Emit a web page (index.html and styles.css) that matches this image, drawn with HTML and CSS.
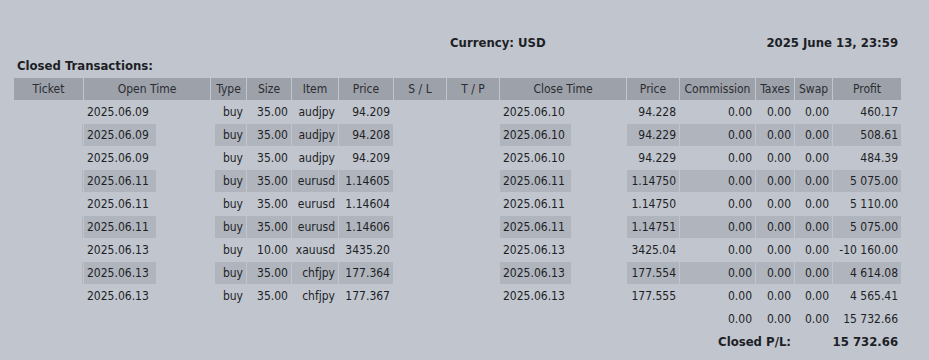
FILE: index.html
```html
<!DOCTYPE html>
<html>
<head>
<meta charset="utf-8">
<link rel="stylesheet" href="styles.css">
</head>
<body>
<table class="report">
  <colgroup>
    <col class="w69"><col class="w72"><col class="w53"><col class="w3"><col class="w31"><col class="w44"><col class="w46"><col class="w54"><col class="w52"><col class="w52"><col class="w71"><col class="w54"><col class="w52"><col class="w75"><col class="w38"><col class="w37"><col class="w68">
  </colgroup>
  <tr class="info">
    <td colspan="9"></td>
    <td colspan="4" class="l b">Currency: USD</td>
    <td colspan="4" class="r b">2025 June 13, 23:59</td>
  </tr>
  <tr class="info">
    <td colspan="17" class="l b">Closed Transactions:</td>
  </tr>
  <tr class="head">
    <td>Ticket</td>
    <td colspan="2">Open Time</td>
    <td colspan="2">Type</td>
    <td>Size</td>
    <td>Item</td>
    <td>Price</td>
    <td>S / L</td>
    <td>T / P</td>
    <td colspan="2">Close Time</td>
    <td>Price</td>
    <td>Commission</td>
    <td>Taxes</td>
    <td>Swap</td>
    <td>Profit</td>
  </tr>
  <tr class="row">
    <td class="tk"></td><td class="l">2025.06.09</td><td></td><td></td><td class="r">buy</td><td class="r">35.00</td><td class="r">audjpy</td><td class="r">94.209</td><td></td><td></td><td class="l">2025.06.10</td><td></td><td class="r">94.228</td><td class="r">0.00</td><td class="r">0.00</td><td class="r">0.00</td><td class="r">460.17</td>
  </tr>
  <tr class="row alt">
    <td class="tk"></td><td class="l">2025.06.09</td><td></td><td></td><td class="r">buy</td><td class="r">35.00</td><td class="r">audjpy</td><td class="r">94.208</td><td></td><td></td><td class="l">2025.06.10</td><td></td><td class="r">94.229</td><td class="r">0.00</td><td class="r">0.00</td><td class="r">0.00</td><td class="r">508.61</td>
  </tr>
  <tr class="row">
    <td class="tk"></td><td class="l">2025.06.09</td><td></td><td></td><td class="r">buy</td><td class="r">35.00</td><td class="r">audjpy</td><td class="r">94.209</td><td></td><td></td><td class="l">2025.06.10</td><td></td><td class="r">94.229</td><td class="r">0.00</td><td class="r">0.00</td><td class="r">0.00</td><td class="r">484.39</td>
  </tr>
  <tr class="row alt">
    <td class="tk"></td><td class="l">2025.06.11</td><td></td><td></td><td class="r">buy</td><td class="r">35.00</td><td class="r">eurusd</td><td class="r">1.14605</td><td></td><td></td><td class="l">2025.06.11</td><td></td><td class="r">1.14750</td><td class="r">0.00</td><td class="r">0.00</td><td class="r">0.00</td><td class="r">5 075.00</td>
  </tr>
  <tr class="row">
    <td class="tk"></td><td class="l">2025.06.11</td><td></td><td></td><td class="r">buy</td><td class="r">35.00</td><td class="r">eurusd</td><td class="r">1.14604</td><td></td><td></td><td class="l">2025.06.11</td><td></td><td class="r">1.14750</td><td class="r">0.00</td><td class="r">0.00</td><td class="r">0.00</td><td class="r">5 110.00</td>
  </tr>
  <tr class="row alt">
    <td class="tk"></td><td class="l">2025.06.11</td><td></td><td></td><td class="r">buy</td><td class="r">35.00</td><td class="r">eurusd</td><td class="r">1.14606</td><td></td><td></td><td class="l">2025.06.11</td><td></td><td class="r">1.14751</td><td class="r">0.00</td><td class="r">0.00</td><td class="r">0.00</td><td class="r">5 075.00</td>
  </tr>
  <tr class="row">
    <td class="tk"></td><td class="l">2025.06.13</td><td></td><td></td><td class="r">buy</td><td class="r">10.00</td><td class="r">xauusd</td><td class="r">3435.20</td><td></td><td></td><td class="l">2025.06.13</td><td></td><td class="r">3425.04</td><td class="r">0.00</td><td class="r">0.00</td><td class="r">0.00</td><td class="r">-10 160.00</td>
  </tr>
  <tr class="row alt">
    <td class="tk"></td><td class="l">2025.06.13</td><td></td><td></td><td class="r">buy</td><td class="r">35.00</td><td class="r">chfjpy</td><td class="r">177.364</td><td></td><td></td><td class="l">2025.06.13</td><td></td><td class="r">177.554</td><td class="r">0.00</td><td class="r">0.00</td><td class="r">0.00</td><td class="r">4 614.08</td>
  </tr>
  <tr class="row">
    <td class="tk"></td><td class="l">2025.06.13</td><td></td><td></td><td class="r">buy</td><td class="r">35.00</td><td class="r">chfjpy</td><td class="r">177.367</td><td></td><td></td><td class="l">2025.06.13</td><td></td><td class="r">177.555</td><td class="r">0.00</td><td class="r">0.00</td><td class="r">0.00</td><td class="r">4 565.41</td>
  </tr>
  <tr class="row">
    <td colspan="13"></td><td class="r">0.00</td><td class="r">0.00</td><td class="r">0.00</td><td class="r">15 732.66</td>
  </tr>
  <tr class="row">
    <td colspan="10"></td><td colspan="5" class="r b">Closed P/L:</td><td colspan="2" class="r b">15 732.66</td>
  </tr>
</table>
</body>
</html>
```
FILE: styles.css
```css
html, body {
  margin: 0;
  padding: 0;
  background: #c1c5cd;
  color: #1d1f27;
  font-family: "DejaVu Sans Condensed", "DejaVu Sans", sans-serif;
  font-stretch: condensed;
  font-size: 12px;
  overflow: hidden;
}

.report {
  margin-top: 31px;
  margin-left: 13px;
  width: 889px;
  table-layout: fixed;
  border-collapse: separate;
  border-spacing: 1px;
}

.report td {
  height: 22px;
  padding: 0 3px;
  line-height: 22px;
  white-space: nowrap;
  overflow: hidden;
  box-sizing: border-box;
}

.w69 { width: 69px; }
.w72 { width: 72px; }
.w53 { width: 53px; }
.w3 { width: 3px; }
.w31 { width: 31px; }
.w44 { width: 44px; }
.w46 { width: 46px; }
.w54 { width: 54px; }
.w52 { width: 52px; }
.w71 { width: 71px; }
.w75 { width: 75px; }
.w38 { width: 38px; }
.w37 { width: 37px; }
.w68 { width: 68px; }

.head td {
  background: #9da1a9;
  color: #2b2d33;
  text-align: center;
}

.l { text-align: left; }
.r { text-align: right; }

.report td.b {
  font-weight: bold;
  font-size: 13px;
}

.alt td:not(:empty) {
  background: #b0b4bc;
}

.alt td.tk {
  box-shadow: inset -1px 0 0 #b0b4bc;
}
```
